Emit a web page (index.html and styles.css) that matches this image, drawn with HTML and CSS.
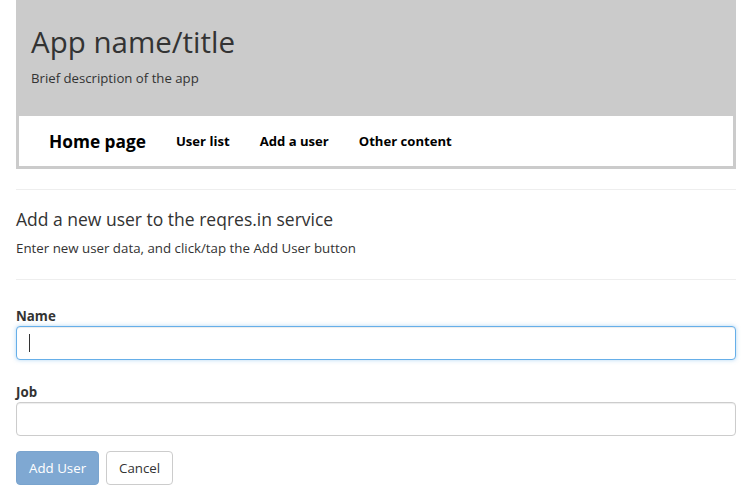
FILE: index.html
```html
<!DOCTYPE html>
<html>
<head>
<meta charset="utf-8">
<link rel="stylesheet" href="styles.css">
</head>
<body>
<div class="page">
  <header class="masthead">
    <div class="brand">
      <h1 class="title">App name/title</h1>
      <p class="tagline">Brief description of the app</p>
    </div>
    <nav class="nav">
      <a class="nav-home">Home page</a>
      <a class="nav-link">User list</a>
      <a class="nav-link">Add a user</a>
      <a class="nav-link">Other content</a>
    </nav>
  </header>
  <hr class="rule rule-top">
  <section class="intro">
    <h2 class="heading">Add a new user to the reqres.in service</h2>
    <p class="lead">Enter new user data, and click/tap the Add User button</p>
  </section>
  <hr class="rule rule-bottom">
  <form class="form">
    <div class="field">
      <label class="label">Name</label>
      <div class="input focused"><span class="caret"></span></div>
    </div>
    <div class="field field-last">
      <label class="label">Job</label>
      <div class="input"></div>
    </div>
    <div class="actions">
      <button type="button" class="btn btn-primary">Add User</button>
      <button type="button" class="btn btn-default">Cancel</button>
    </div>
  </form>
</div>
</body>
</html>
```
FILE: styles.css
```css
* { box-sizing: border-box; }
html, body { margin: 0; padding: 0; background: #fff; }
body {
  font-family: "Open Sans", "Noto Sans", sans-serif;
  color: #333;
  font-size: 13.3px;
}
.page {
  width: 720px;
  margin-left: 16px;
}
.masthead {
  background: #cbcbcb;
  padding: 0 3px 3px 3px;
}
.brand {
  padding: 26px 12px 29px 12px;
}
.title {
  margin: 0;
  font-size: 29.5px;
  font-weight: 400;
  line-height: 32px;
  color: #333;
}
.tagline {
  margin: 11px 0 0 0;
  font-size: 13.2px;
  line-height: 18px;
  color: #333;
}
.nav {
  background: #fff;
  height: 50px;
  display: flex;
  align-items: center;
  gap: 30px;
  padding-left: 30px;
}
.nav a { color: #000; font-weight: 700; text-decoration: none; }
.nav-home { font-size: 17.3px; }
.nav-link { font-size: 13.1px; }
.rule {
  border: 0;
  border-top: 1px solid #eee;
  margin: 0;
}
.rule-top { margin-top: 20px; }
.intro { padding-top: 18px; padding-bottom: 22px; }
.heading {
  margin: 0;
  font-size: 17.5px;
  font-weight: 500;
  line-height: 22px;
  color: #333;
}
.lead {
  margin: 9px 0 0 0;
  font-size: 13.3px;
  line-height: 18px;
  color: #333;
}
.form { padding-top: 27px; }
.field { margin-bottom: 23px; }
.field-last { margin-bottom: 15px; }
.label {
  display: block;
  font-size: 13.3px;
  font-weight: 700;
  line-height: 18px;
  margin-bottom: 1px;
  color: #333;
}
.input {
  height: 34px;
  border: 1px solid #ccc;
  border-radius: 4px;
  background: #fff;
  box-shadow: inset 0 1px 1px rgba(0,0,0,.075);
  padding: 6px 12px;
  display: flex;
  align-items: center;
}
.input.focused {
  border-color: #66afe9;
  box-shadow: inset 0 1px 1px rgba(0,0,0,.075), 0 0 4px rgba(102,175,233,.5);
}
.caret {
  display: block;
  width: 1px;
  height: 18px;
  background: #333;
}
.actions {
  display: flex;
  gap: 7px;
}
.btn {
  height: 34px;
  font-family: inherit;
  font-size: 13.3px;
  border-radius: 4px;
  padding: 0 12px;
  line-height: 32px;
  cursor: pointer;
}
.btn-primary {
  background: #7fa8d2;
  border: 1px solid #7aa4ce;
  color: #fff;
}
.btn-default {
  background: #fff;
  border: 1px solid #ccc;
  color: #333;
}
```
